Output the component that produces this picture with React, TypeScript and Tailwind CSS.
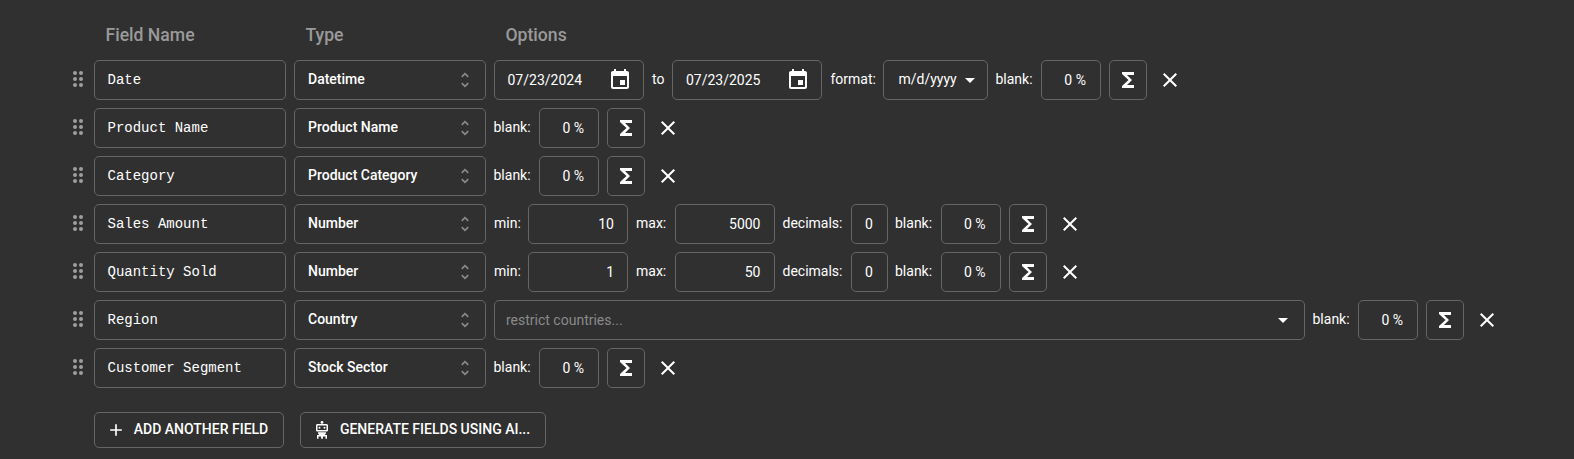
import React from "react";

const P = ({ d, size = 24, className = "" }: { d: string; size?: number; className?: string }) => (
  <svg width={size} height={size} viewBox="0 0 24 24" fill="currentColor" className={className}>
    <path d={d} />
  </svg>
);

const box = "h-10 border border-[#666] rounded-[5px] flex items-center shrink-0 text-[14px] text-white";

const Label = ({ children, className = "" }: { children: React.ReactNode; className?: string }) => (
  <span className={`text-[14px] text-white shrink-0 pb-[2px] ${className}`}>{children}</span>
);

const Blank = () => (
  <>
    <Label className="w-[37.5px] -ml-[0.5px]">blank:</Label>
    <div className={`${box} w-[60px] justify-end px-[14px]`}>0 %</div>
    <button className={`${box} w-[38px] justify-center`}>
      <P d="M18 4H6v2l6.5 6L6 18v2h12v-3h-7l5-5-5-5h7z" />
    </button>
    <button className="w-[30px] h-10 flex items-center justify-center text-white shrink-0">
      <P d="M19 6.41 17.59 5 12 10.59 6.41 5 5 6.41 10.59 12 5 17.59 6.41 19 12 13.41 17.59 19 19 17.59 13.41 12z" />
    </button>
  </>
);

const DateBox = ({ v }: { v: string }) => (
  <div className={`${box} w-[150px] justify-between pl-[12.5px] pr-[11px]`}>
    <span>{v}</span>
    <P d="M17 12h-5v5h5v-5zM16 1v2H8V1H6v2H5c-1.11 0-1.99.9-1.99 2L3 19c0 1.1.89 2 2 2h14c1.1 0 2-.9 2-2V5c0-1.1-.9-2-2-2h-1V1h-2zm3 18H5V8h14v11z" />
  </div>
);

const Range = ({ min, max }: { min: string; max: string }) => (
  <>
    <Label className="w-[26px]">min:</Label>
    <div className={`${box} w-[100px] justify-end px-[13px]`}>{min}</div>
    <Label className="w-[30.5px]">max:</Label>
    <div className={`${box} w-[100px] justify-end px-[13px]`}>{max}</div>
    <Label className="w-[60px]">decimals:</Label>
    <div className={`${box} w-[37px] justify-center`}>0</div>
    <Blank />
  </>
);

const Row = ({ name, type, children }: { name: string; type: string; children: React.ReactNode }) => (
  <div className="flex items-center gap-2 h-10">
    <div className="w-[20px] flex justify-center text-[#9e9e9e] shrink-0 pl-1 pb-[2px]">
      <svg width="12" height="18" viewBox="0 0 12 18" fill="currentColor">
        <circle cx="3" cy="3" r="2" /><circle cx="9" cy="3" r="2" />
        <circle cx="3" cy="9" r="2" /><circle cx="9" cy="9" r="2" />
        <circle cx="3" cy="15" r="2" /><circle cx="9" cy="15" r="2" />
      </svg>
    </div>
    <div className={`${box} w-[192px] px-[12.5px] font-['Liberation_Mono',monospace] text-[#eee]`}>{name}</div>
    <div className={`${box} w-[192px] pl-[13px] pr-[10px] justify-between font-medium`}>
      <span className="pb-[2px]">{type}</span>
      <P d="M12 5.83 15.17 9l1.41-1.41L12 3 7.41 7.59 8.83 9 12 5.83zm0 12.34L8.83 15l-1.41 1.41L12 21l4.59-4.59L15.17 15 12 18.17z" size={20} className="text-[#8c8c8c]" />
    </div>
    {children}
  </div>
);

export default function App() {
  return (
    <div className="min-h-[459px] bg-[#303030] font-['Roboto',sans-serif] pl-[66px] pr-[72px] pt-4">
      <div className="flex text-[17.6px] font-medium text-[#9a9a9a] h-[39px] items-center leading-none pl-[39.5px]">
        <span className="w-[200px]">Field Name</span>
        <span className="w-[200px]">Type</span>
        <span>Options</span>
      </div>
      <div className="flex flex-col gap-2 mt-[5px]">
        <Row name="Date" type="Datetime">
          <DateBox v="07/23/2024" />
          <Label>to</Label>
          <DateBox v="07/23/2025" />
          <Label className="w-[45px]">format:</Label>
          <div className={`${box} w-[104.5px] pl-[14px] pr-[5px] justify-between`}>
            <span className="pb-[2px]">m/d/yyyy</span>
            <P d="M7 10l5 5 5-5z" />
          </div>
          <Blank />
        </Row>
        <Row name="Product Name" type="Product Name"><Blank /></Row>
        <Row name="Category" type="Product Category"><Blank /></Row>
        <Row name="Sales Amount" type="Number"><Range min="10" max="5000" /></Row>
        <Row name="Quantity Sold" type="Number"><Range min="1" max="50" /></Row>
        <Row name="Region" type="Country">
          <div className={`${box} flex-1 mr-[0.5px] pl-[11px] pr-[9px] justify-between`}>
            <span className="text-[#8a8a8a]">restrict countries...</span>
            <P d="M7 10l5 5 5-5z" />
          </div>
          <Blank />
        </Row>
        <Row name="Customer Segment" type="Stock Sector"><Blank /></Row>
      </div>
      <div className="flex gap-4 mt-[24px] pl-[28px]">
        <button className="h-9 w-[190px] border border-[#666] rounded-[5px] flex items-center justify-center gap-2 pr-1 text-[14px] font-medium text-white">
          <P d="M19 13h-6v6h-2v-6H5v-2h6V5h2v6h6v2z" size={20} />
          <span className="pb-[2px]">ADD ANOTHER FIELD</span>
        </button>
        <button className="h-9 w-[246px] border border-[#666] rounded-[5px] flex items-center justify-center gap-2 pr-1 text-[14px] font-medium text-white">
          <svg width="20" height="20" viewBox="0 0 20 20" fill="currentColor">
            <circle cx="10" cy="2.4" r="1.4" />
            <path fillRule="evenodd" d="M5.6 4h8.8c.9 0 1.6.7 1.6 1.6v4.3c0 .9-.7 1.6-1.6 1.6H5.6C4.700 11.500 4 10.800 4 9.900V5.600C4 4.700 4.700 4 5.600 4zM5.500 5.500v4.500h9V5.500zM7.500 6.700a1 1 0 100 2 1 1 0 000-2zm5 0a1 1 0 100 2 1 1 0 000-2z" />
            <path d="M6 12.300h8v1.400h-.8V15H15v3.800h-1.500v-2.400h-2.600v2.400H9.100v-2.400H6.500v2.400H5V15h1.800v-1.300H6z" />
          </svg>
          <span className="pb-[2px]">GENERATE FIELDS USING AI...</span>
        </button>
      </div>
    </div>
  );
}
